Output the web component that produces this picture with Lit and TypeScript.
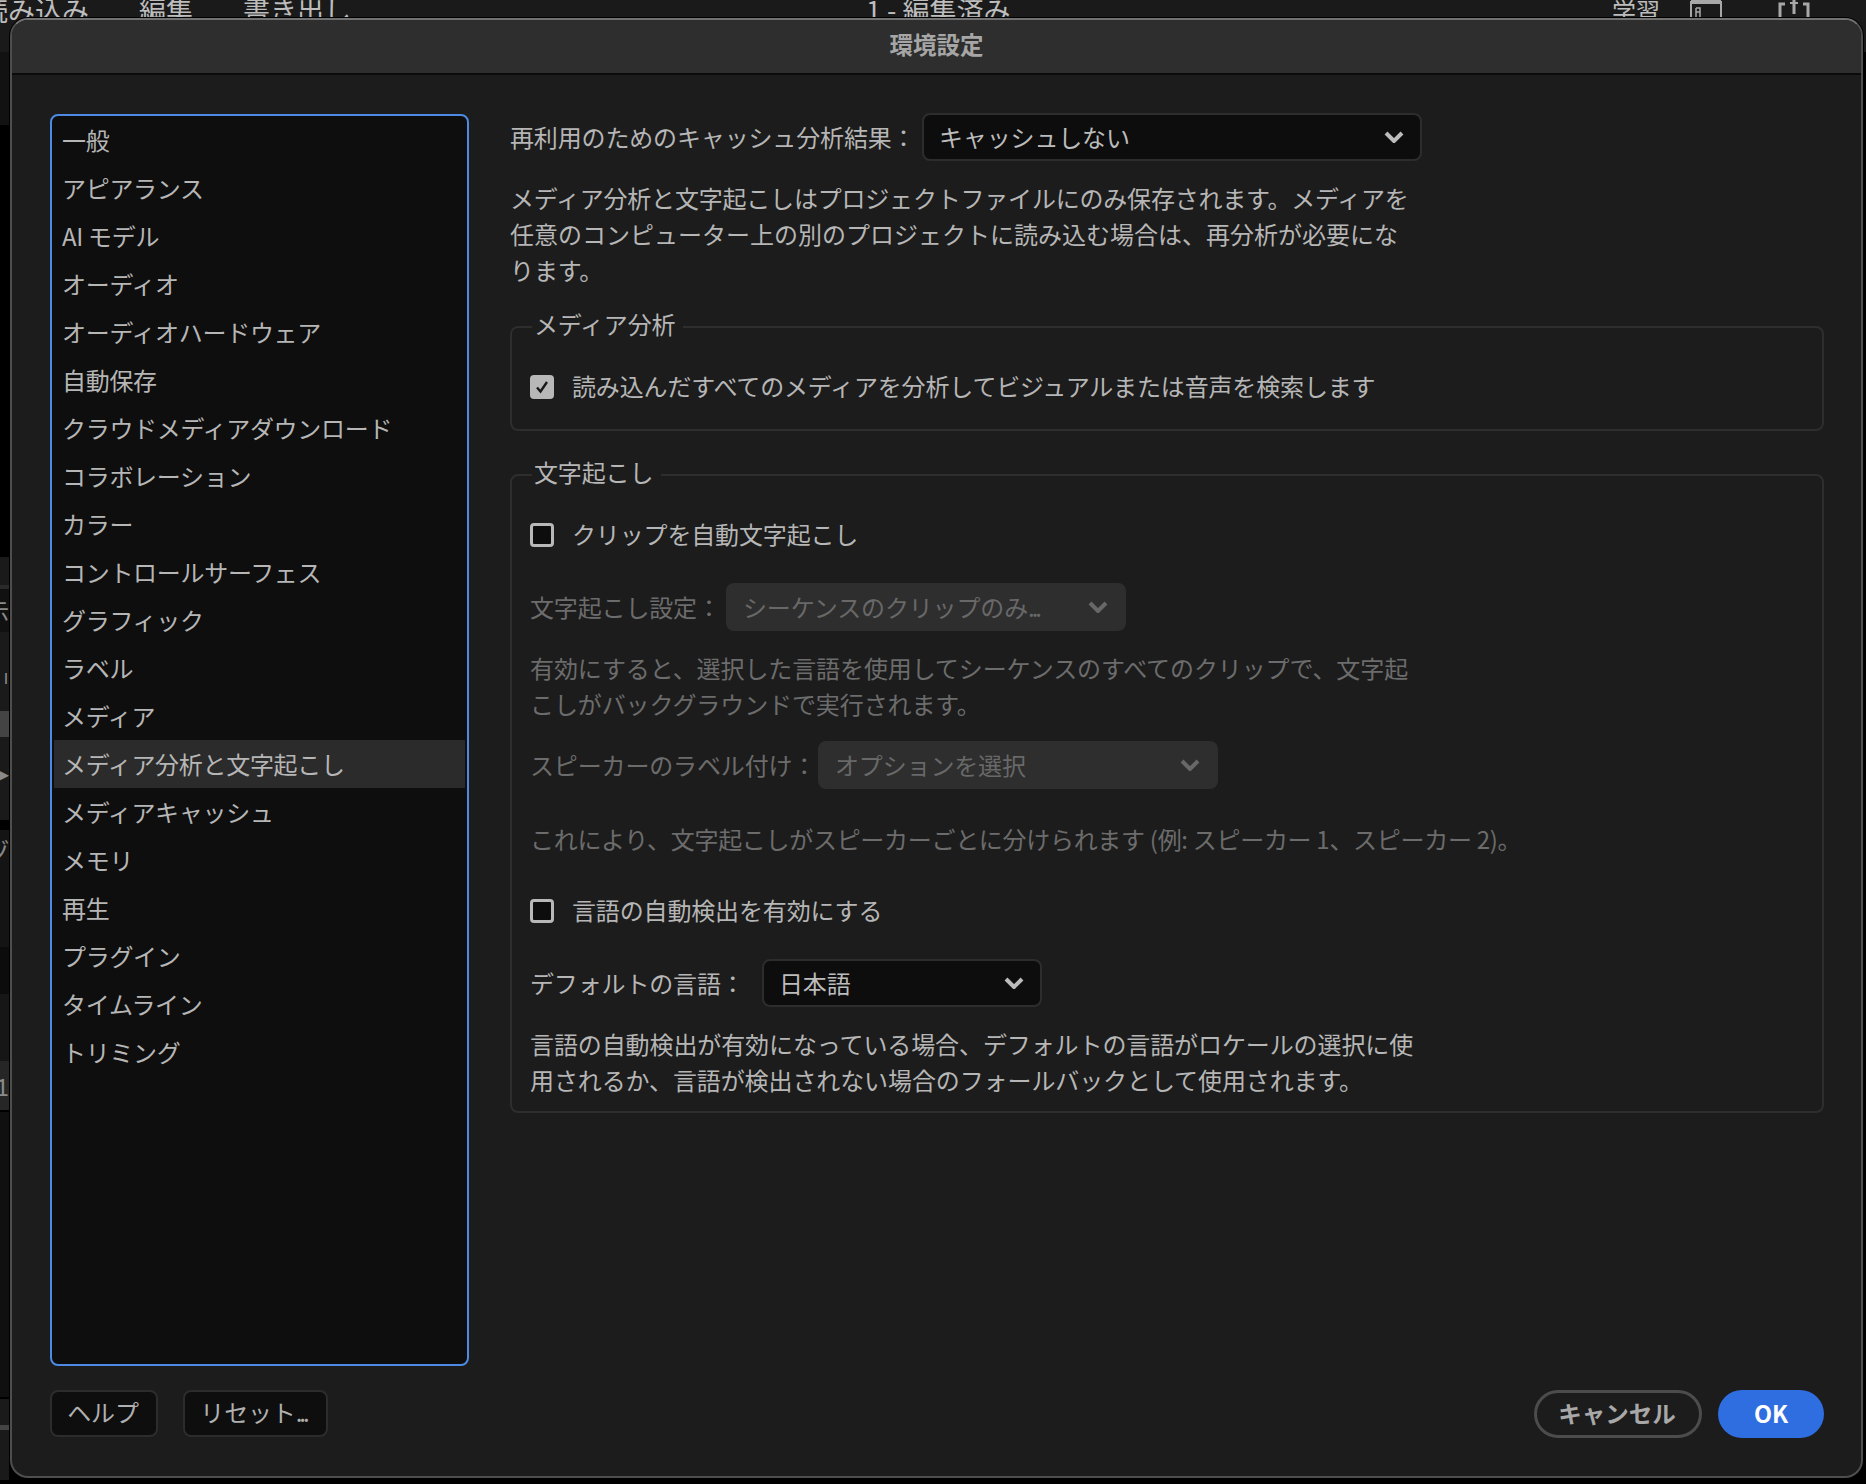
import { LitElement, html, css } from "lit";
import { customElement } from "lit/decorators.js";

const NAV = ["一般","アピアランス","AI モデル","オーディオ","オーディオハードウェア","自動保存","クラウドメディアダウンロード","コラボレーション","カラー","コントロールサーフェス","グラフィック","ラベル","メディア","メディア分析と文字起こし","メディアキャッシュ","メモリ","再生","プラグイン","タイムライン","トリミング"];

const STRIPS: [number, string, string?][] = [
  [73,"#121212"],[432,"#000"],[28,"#1a1a1a"],[4,"#2a2a2a"],[43,"#111","示"],[41,"#1a1a1a"],[11,"#1a1a1a","|"],[27,"#1a1a1a"],[26,"#444"],
  [18,"#1a1a1a"],[34,"#1a1a1a","▸"],[31,"#1a1a1a"],[10,"#000"],[40,"#141414","ヅ"],[77,"#141414"],[47,"#0c0c0c"],[67,"#161616"],[49,"#262626","1"],[2,"#000"],
  [285,"#101010"],[2,"#000"],[26,"#1a1a1a"],[5,"#444"],[50,"#1a1a1a"],
];

const chev = () => html`<svg class="chev" viewBox="0 0 20 12" width="20" height="12"><path d="M2 2 L10 10 L18 2" fill="none" stroke="currentColor" stroke-width="4"/></svg>`;

@customElement("app-root")
export class AppRoot extends LitElement {
  static styles = css`
    :host { display:block; width:1866px; height:1484px; position:relative; overflow:hidden; background:#000;
      font-family:"Noto Sans CJK JP","Noto Sans",sans-serif; font-size:24px; color:#b6b6b6; letter-spacing:-0.15px; }
    .topbar { height:52px; background:#1a1a1a; display:flex; align-items:flex-start; line-height:20px; font-size:27px; color:#bdbdbd; letter-spacing:0; }
    .tl { display:flex; gap:50px; margin-left:-19px; }
    .tc { margin-left:515px; }
    .tr { margin-left:auto; display:flex; gap:30px; padding-right:56px; }
    .tr .learn { font-size:24px; }
    .tr svg { display:block; }
    .tr .last { margin-left:26px; }
    .strips { width:9px; display:flex; flex-direction:column; }
    .strip { display:flex; justify-content:flex-end; align-items:center; overflow:hidden; font-size:24px; color:#8a8a8a; line-height:1; }
    .dialog { position:absolute; left:10px; top:18px; width:1853px; height:1460px; box-sizing:border-box; display:flex; flex-direction:column;
      background:#1c1c1c; border:2px solid #4e4e4e; border-top-color:#727272; border-radius:18px; box-shadow:0 0 0 1px #000; overflow:hidden; }
    .title { height:55px; box-sizing:border-box; flex:none; background:#2e2e2e; border-bottom:2px solid #0b0b0b; padding-bottom:6px; display:flex; align-items:center; justify-content:center;
      font-weight:700; font-size:23.5px; color:#a6a6a6; letter-spacing:0; }
    .body { flex:1; min-height:0; display:flex; flex-direction:column; gap:24px; padding:38px 37px 38px 38px; }
    .main { flex:1; min-height:0; display:flex; gap:41px; }
    .list { width:419px; box-sizing:border-box; margin-top:1px; border:2px solid #4c8ae3; border-radius:8px; background:#0e0e0e; padding:0 2px; letter-spacing:-0.3px; }
    .item { height:48px; box-sizing:border-box; display:flex; align-items:center; padding:0 0 2px 8px; white-space:nowrap; }
    .item.sel { background:#2b2b2b; }
    .right { flex:1; min-width:0; display:flex; flex-direction:column; }
    .row { display:flex; align-items:center; white-space:nowrap; }
    .row > span { padding-bottom:2px; }
    .sel-box { height:48px; box-sizing:border-box; display:flex; align-items:center; justify-content:space-between; border-radius:8px;
      background:#0d0d0d; border:2px solid #2d2d2d; padding:0 16px 2px 15px; color:#bcbcbc; }
    .sel-box.off { background:#2e2e2e; border-color:#2e2e2e; color:#686868; }
    .chev { display:block; flex:none; margin-top:2px; }
    .dots { letter-spacing:-3px; }
    .p { line-height:36px; white-space:nowrap; letter-spacing:-0.1px; }
    .t1 { letter-spacing:-0.2px; }
    .t2 { letter-spacing:0; }
    .note { letter-spacing:-0.3px; }
    .off-t { color:#6c6c6c; }
    .group { position:relative; border:2px solid #2e2e2e; border-radius:8px; padding:37px 16px 0 18px; }
    .legend { position:absolute; left:20px; top:-21px; line-height:34px; padding:0 8px 0 2px; background:#1c1c1c; color:#b6b6b6; }
    .check { height:40px; display:flex; align-items:center; gap:18px; }
    .box { width:24px; height:24px; box-sizing:border-box; flex:none; margin-top:4px; border-radius:4px; background:#0d0d0d; border:3px solid #b8b8b8; }
    .box.on { background:#b8b8b8; border:none; display:flex; align-items:center; justify-content:center; }
    .foot { flex:none; display:flex; height:48px; }
    .btn { box-sizing:border-box; height:47px; display:flex; align-items:center; justify-content:center; background:#0e0e0e; border:2px solid #2c2c2c; border-radius:8px; color:#b0b0b0; padding-bottom:4px; }
    .help { width:108px; padding-right:2px; }
    .reset { width:145px; margin-left:25px; padding-right:4px; }
    .pill { box-sizing:border-box; height:48px; display:flex; align-items:center; justify-content:center; border-radius:24px; font-weight:700; letter-spacing:0; padding-bottom:2px; }
    .cancel { margin-left:auto; width:168px; border:3px solid #4c4c4c; color:#a8a8a8; font-size:23.5px; padding-right:2px; }
    .ok { width:106px; margin-left:16px; background:#2f6ee0; color:#fff; font-size:23.5px; }
    .m19 { margin-top:19px; } .m30 { margin-top:30px; } .m32 { margin-top:32px; }
    .m38 { margin-top:38px; } .m43 { margin-top:43px; } .m13 { margin-bottom:13px; } .m24 { margin-bottom:24px; }
  `;

  render() {
    return html`
      <div class="topbar">
        <div class="tl"><span>読み込み</span><span>編集</span><span>書き出し</span></div>
        <div class="tc">1 - 編集済み</div>
        <div class="tr">
          <span class="learn">学習</span>
          <svg width="32" height="18" viewBox="0 0 32 18" fill="none" stroke="#a8a8a8" stroke-width="2"><path d="M1 18V2H31V18" /><path d="M1 2H31" stroke-width="4"/><path d="M6 8H10V18M6 8V18M6 12H10" stroke-width="1.5"/></svg>
          <svg class="last" width="32" height="18" viewBox="0 0 32 18" fill="none" stroke="#a8a8a8" stroke-width="3"><path d="M2 18V4H7M25 4H30V18"/><path d="M16 0V14"/><path d="M12 3H20" stroke-width="2"/></svg>
        </div>
      </div>
      <div class="strips">
        ${STRIPS.map(([h, bg, t]) => html`<div class="strip" style="height:${h}px;background:${bg}">${t ?? ""}</div>`)}
      </div>
      <div class="dialog">
        <div class="title">環境設定</div>
        <div class="body">
          <div class="main">
            <div class="list">
              ${NAV.map((n, i) => html`<div class="item ${i === 13 ? "sel" : ""}">${n}</div>`)}
            </div>
            <div class="right">
              <div class="row">
                <span style="width:412px">再利用のためのキャッシュ分析結果：</span>
                <div class="sel-box" style="width:500px"><span>キャッシュしない</span>${chev()}</div>
              </div>
              <div class="p m19"><span class="t1">メディア分析と文字起こしはプロジェクトファイルにのみ保存されます。メディアを</span><br><span class="t2">任意のコンピューター上の別のプロジェクトに読み込む場合は、再分析が必要にな</span><br>ります。</div>
              <div class="group m38">
                <div class="legend">メディア分析</div>
                <div class="check m24"><span class="box on"><svg width="16" height="16" viewBox="0 0 16 16"><path d="M3 8.5 L6.5 12.5 L13 3" fill="none" stroke="#1a1a1a" stroke-width="2.4"/></svg></span><span>読み込んだすべてのメディアを分析してビジュアルまたは音声を検索します</span></div>
              </div>
              <div class="group m43">
                <div class="legend">文字起こし</div>
                <div class="check"><span class="box"></span><span>クリップを自動文字起こし</span></div>
                <div class="row m30">
                  <span class="off-t" style="width:196px">文字起こし設定：</span>
                  <div class="sel-box off" style="width:400px"><span>シーケンスのクリップのみ<span class="dots">...</span></span>${chev()}</div>
                </div>
                <div class="p off-t m19">有効にすると、選択した言語を使用してシーケンスのすべてのクリップで、文字起<br>こしがバックグラウンドで実行されます。</div>
                <div class="row m19">
                  <span class="off-t" style="width:288px">スピーカーのラベル付け：</span>
                  <div class="sel-box off" style="width:400px"><span>オプションを選択</span>${chev()}</div>
                </div>
                <div class="p note off-t m32">これにより、文字起こしがスピーカーごとに分けられます (例: スピーカー 1、スピーカー 2)。</div>
                <div class="check m32"><span class="box"></span><span>言語の自動検出を有効にする</span></div>
                <div class="row m30">
                  <span style="width:232px">デフォルトの言語：</span>
                  <div class="sel-box" style="width:280px"><span>日本語</span>${chev()}</div>
                </div>
                <div class="p m19 m13">言語の自動検出が有効になっている場合、デフォルトの言語がロケールの選択に使<br>用されるか、言語が検出されない場合のフォールバックとして使用されます。</div>
              </div>
            </div>
          </div>
          <div class="foot">
            <div class="btn help">ヘルプ</div>
            <div class="btn reset">リセット<span class="dots">...</span></div>
            <div class="pill cancel">キャンセル</div>
            <div class="pill ok">OK</div>
          </div>
        </div>
      </div>
    `;
  }
}
